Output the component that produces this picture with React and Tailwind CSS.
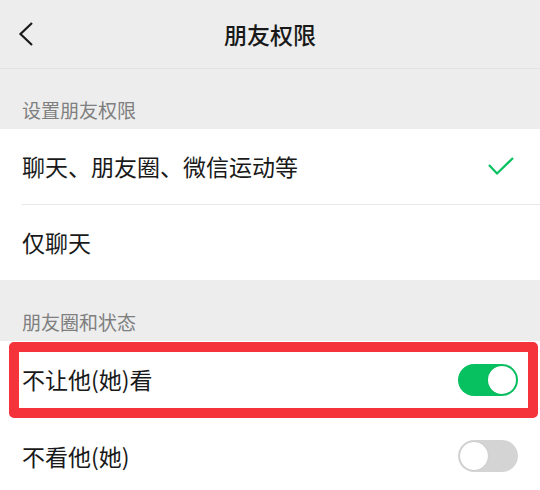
import React from "react";

const font = { fontFamily: '"Noto Sans CJK SC", "Noto Sans", sans-serif' };

const Toggle = ({ on }) => (
  <div
    className={`w-[60px] h-[32px] rounded-full p-[2px] flex ${
      on ? "bg-[#07c160] justify-end" : "bg-[#d4d4d4] justify-start"
    }`}
  >
    <div className="w-[28px] h-[28px] rounded-full bg-white shadow-[0_0_1px_rgba(0,0,0,0.2)]" />
  </div>
);

const SectionHeader = ({ children, h }) => (
  <div className={`${h} flex items-end px-[22px] pb-[7px] text-[19px] leading-[24px] text-[#7f7f7f]`}>
    {children}
  </div>
);

export default function App() {
  return (
    <div className="w-[540px] h-[490px] overflow-hidden bg-[#ededed] text-[#191919]" style={font}>
      {/* nav bar */}
      <div className="h-[69px] flex items-center relative border-b border-[#e3e3e3]">
        <svg className="ml-[18px]" width="16" height="26" viewBox="0 0 16 26">
          <polyline
            points="14,2 2.5,13 14,24"
            fill="none"
            stroke="#1a1a1a"
            strokeWidth="2.2"
          />
        </svg>
        <div className="absolute inset-x-0 text-center text-[23px] font-medium leading-[30px] pointer-events-none">
          朋友权限
        </div>
      </div>

      <SectionHeader h="h-[60px]">设置朋友权限</SectionHeader>

      <div className="bg-white">
        <div className="h-[75px] flex items-center justify-between pl-[22px] pr-[26px] text-[23px]">
          <span>聊天、朋友圈、微信运动等</span>
          <svg width="26" height="19" viewBox="0 0 26 19">
            <polyline
              points="1,8 9,16.5 25,1"
              fill="none"
              stroke="#07c160"
              strokeWidth="2.2"
            />
          </svg>
        </div>
        <div className="ml-[22px] h-px bg-[#e8e8e8]" />
        <div className="h-[75px] flex items-center px-[22px] text-[23px]">仅聊天</div>
      </div>

      <SectionHeader h="h-[61px]">朋友圈和状态</SectionHeader>

      <div className="bg-white">
        <div className="relative h-[77px] flex items-center justify-between pl-[22px] pr-[22px] text-[23px]">
          <span>不让他(她)看</span>
          <Toggle on />
          <div className="absolute top-[1px] bottom-0 left-[9px] right-[2px] border-[10px] border-[#f5333b] rounded-[5px] pointer-events-none" />
        </div>
        <div className="h-[76px] flex items-center justify-between pl-[22px] pr-[22px] text-[23px]">
          <span>不看他(她)</span>
          <Toggle />
        </div>
      </div>
    </div>
  );
}
